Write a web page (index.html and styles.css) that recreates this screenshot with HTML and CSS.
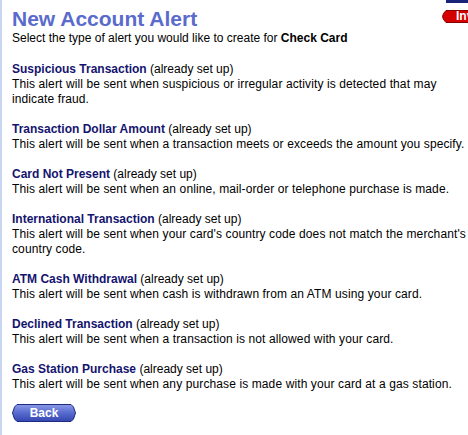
FILE: index.html
```html
<!DOCTYPE html>
<html>
<head>
<meta charset="utf-8">
<link rel="stylesheet" href="styles.css">
</head>
<body>
<div class="page">
  <div class="topbar"></div>
  <div class="redbtn">
    <svg class="btn-bg" width="40" height="13" viewBox="0 0 40 13" preserveAspectRatio="none">
      <polygon points="4,0.5 40,0.5 40,12.5 4,12.5 1.5,9.5 0.5,6.5 1.5,3.5" fill="#d40000" stroke="#8a0000" stroke-width="1"/>
    </svg>
    <span class="btn-label">Investigate</span>
  </div>
  <h1 class="title">New Account Alert</h1>
  <p class="intro">Select the type of alert you would like to create for <b>Check Card</b></p>

  <div class="alert">
    <div><span class="name">Suspicious Transaction</span> (already set up)</div>
    <div class="desc">This alert will be sent when suspicious or irregular activity is detected that may indicate fraud.</div>
  </div>
  <div class="alert">
    <div><span class="name">Transaction Dollar Amount</span> (already set up)</div>
    <div class="desc">This alert will be sent when a transaction meets or exceeds the amount you specify.</div>
  </div>
  <div class="alert">
    <div><span class="name">Card Not Present</span> (already set up)</div>
    <div class="desc">This alert will be sent when an online, mail-order or telephone purchase is made.</div>
  </div>
  <div class="alert">
    <div><span class="name">International Transaction</span> (already set up)</div>
    <div class="desc">This alert will be sent when your card's country code does not match the merchant's country code.</div>
  </div>
  <div class="alert">
    <div><span class="name">ATM Cash Withdrawal</span> (already set up)</div>
    <div class="desc">This alert will be sent when cash is withdrawn from an ATM using your card.</div>
  </div>
  <div class="alert">
    <div><span class="name">Declined Transaction</span> (already set up)</div>
    <div class="desc">This alert will be sent when a transaction is not allowed with your card.</div>
  </div>
  <div class="alert">
    <div><span class="name">Gas Station Purchase</span> (already set up)</div>
    <div class="desc">This alert will be sent when any purchase is made with your card at a gas station.</div>
  </div>

  <div class="backbtn">
    <svg class="btn-bg" width="64" height="18" viewBox="0 0 64 18">
      <defs>
        <linearGradient id="bg" x1="0" y1="0" x2="0" y2="1">
          <stop offset="0" stop-color="#8b9ae6"/>
          <stop offset="0.45" stop-color="#5b6fd2"/>
          <stop offset="1" stop-color="#3445b0"/>
        </linearGradient>
      </defs>
      <polygon points="5,0.5 59,0.5 61.5,3 63.5,9 61.5,15 59,17.5 5,17.5 2.5,15 0.5,9 2.5,3" fill="url(#bg)" stroke="#1f2b80" stroke-width="1"/>
    </svg>
    <span class="btn-label">Back</span>
  </div>
</div>
</body>
</html>
```
FILE: styles.css
```css
html, body {
  margin: 0;
  padding: 0;
  overflow: hidden;
  background: #ffffff;
}
.page {
  position: relative;
  width: 468px;
  height: 435px;
  box-sizing: border-box;
  border-left: 2px solid #c9d6f2;
  padding: 6px 0 0 10px;
  font-family: "Liberation Sans", Arial, sans-serif;
  font-size: 12px;
  line-height: 15px;
  color: #000000;
}
.title {
  margin: 0;
  font-size: 21px;
  line-height: 25px;
  font-weight: bold;
  color: #5a6bcb;
}
.intro {
  margin: 0 0 16px 0;
}
.intro b {
  color: #000;
}
.alert {
  margin-bottom: 15px;
}
.desc {
  letter-spacing: 0.11px;
}
.name {
  font-weight: bold;
  color: #14146e;
}
.topbar {
  position: absolute;
  top: 0;
  left: 444px;
  width: 40px;
  height: 3px;
  background: #1a237a;
}
.redbtn {
  position: absolute;
  top: 10px;
  left: 440px;
  width: 40px;
  height: 13px;
  display: grid;
  overflow: hidden;
}
.btn-bg, .btn-label {
  grid-area: 1 / 1;
}
.redbtn .btn-label {
  color: #fff;
  font-weight: bold;
  font-size: 12px;
  line-height: 13px;
  padding-left: 14px;
  white-space: nowrap;
}
.backbtn {
  display: grid;
  width: 64px;
  height: 18px;
  margin-top: -3px;
}
.backbtn .btn-label {
  color: #fff;
  font-weight: bold;
  font-size: 12px;
  line-height: 18px;
  text-align: center;
}
```
